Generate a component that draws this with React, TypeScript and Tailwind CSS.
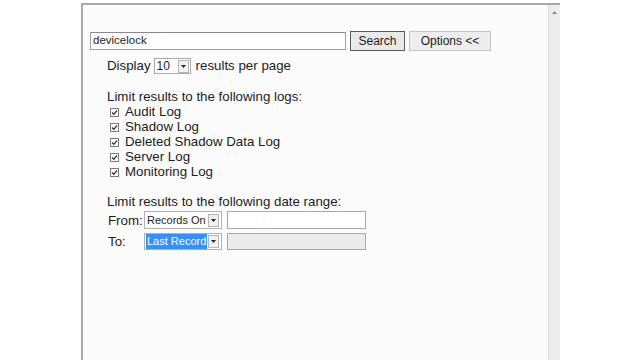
import { Fragment } from 'react';

const LOGS = ['Audit Log', 'Shadow Log', 'Deleted Shadow Data Log', 'Server Log', 'Monitoring Log'];

function DropArrow() {
  return (
    <span className="ml-auto mr-[1px] flex h-[13px] w-[11px] shrink-0 items-center justify-center border border-[#b5b5b5] bg-[#f1f1f1]">
      <svg width="5" height="3" viewBox="0 0 5 3">
        <path d="M0 0h5L2.5 3z" fill="#222" />
      </svg>
    </span>
  );
}

function TinyCheck() {
  return (
    <span className="flex h-[9px] w-[9px] items-center justify-center border border-[#7a7a7a] bg-white">
      <svg width="7" height="7" viewBox="0 0 7 7">
        <path d="M1 3.5l1.8 1.8L6 1.5" fill="none" stroke="#333" strokeWidth="1.3" />
      </svg>
    </span>
  );
}

export default function App() {
  return (
    <div className="h-[360px] w-[640px] overflow-hidden bg-white text-[13.3px] text-[#1c1c1c]" style={{ fontFamily: '"Liberation Sans", Arial, sans-serif' }}>
      {/* Browser frame */}
      <div className="ml-[81px] mt-[3px] flex h-[357px] w-[479px] border-l-2 border-t-2 border-[#a9a9a9] bg-[#fbfbfb]">
        <div className="flex-1 pl-[7px] pt-[26px]">
          {/* Search row */}
          <div className="flex items-center">
            <div className="flex h-[18px] w-[256px] items-center border border-[#a0a0a0] border-t-[#8a8a8a] bg-white pl-[2px] text-[11.5px]">
              devicelock
            </div>
            <button className="ml-[4px] h-[20px] w-[55px] border border-[#5a5a5a] bg-[#e9e9e9] text-[12px]">
              Search
            </button>
            <button className="ml-[4px] h-[20px] w-[82px] border border-[#c4c4c4] bg-[#ededed] text-[12px]">
              Options &lt;&lt;
            </button>
          </div>

          {/* Page size */}
          <div className="mt-[7px] flex h-[16px] items-center pl-[17px]">
            <span>Display</span>
            <span className="ml-[3px] flex h-[16px] w-[37px] items-center border border-[#a8a8a8] bg-white pl-[2px] text-[12px]">
              10
              <DropArrow />
            </span>
            <span className="ml-[5px]">results per page</span>
          </div>

          {/* Logs */}
          <div className="mt-[15px] pl-[17px] leading-[15px]">
            <div>Limit results to the following logs:</div>
            {LOGS.map((log) => (
              <div key={log} className="flex h-[15px] items-center">
                <span className="ml-[3px] mr-[6px] pt-[1px]">
                  <TinyCheck />
                </span>
                {log}
              </div>
            ))}
          </div>

          {/* Date range */}
          <div className="mt-[15px] pl-[17px] leading-[15px]">
            <div>Limit results to the following date range:</div>
            {[
              { label: 'From:', value: 'Records On', selected: false },
              { label: 'To:', value: 'Last Record', selected: true },
            ].map((row, i) => (
              <Fragment key={row.label}>
                <div className={`${i === 0 ? 'mt-[2px] h-[18px]' : 'mt-[4px] h-[17px]'} flex items-center`}>
                  <span className="w-[37px] pl-[1px]">{row.label}</span>
                  <span className="flex h-full w-[78px] items-center overflow-hidden whitespace-nowrap border border-[#b0b0b0] bg-white px-[1px] text-[11px]">
                    <span className={row.selected ? 'bg-[#3390ff] px-[1px] text-white' : 'px-[1px]'}>{row.value}</span>
                    <DropArrow />
                  </span>
                  <span
                    className={`ml-[5px] h-full w-[139px] border border-[#a8a8a8] ${row.selected ? 'bg-[#ebebeb]' : 'bg-white'}`}
                  />
                </div>
              </Fragment>
            ))}
          </div>
        </div>

        {/* Scrollbar */}
        <div className="flex w-[12px] justify-center border-l border-[#dcdcdc] bg-[#ececec] pt-[6px]">
          <svg width="5" height="3" viewBox="0 0 5 3">
            <path d="M2.5 0L5 3H0z" fill="#8a8a8a" />
          </svg>
        </div>
      </div>
    </div>
  );
}
